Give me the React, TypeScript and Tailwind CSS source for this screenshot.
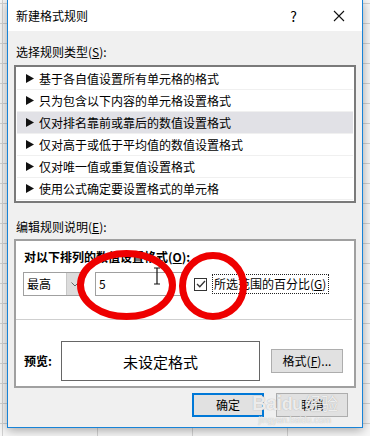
import React, { FC } from "react";

const FONT = "font-['Microsoft_YaHei','Noto_Sans_CJK_SC',sans-serif]";

const ruleTypes = [
  "基于各自值设置所有单元格的格式",
  "只为包含以下内容的单元格设置格式",
  "仅对排名靠前或靠后的数值设置格式",
  "仅对高于或低于平均值的数值设置格式",
  "仅对唯一值或重复值设置格式",
  "使用公式确定要设置格式的单元格",
];

const Arrow: FC = () => (
  <svg width="8" height="9" viewBox="0 0 8 9" className="shrink-0">
    <polygon points="0,0 8,4.5 0,9" fill="#111" />
  </svg>
);

const RuleItem: FC<{ label: string; selected?: boolean }> = ({ label, selected }) => (
  <div
    className={`flex h-[21px] items-center gap-[5px] pl-[9px] text-[12px] leading-none text-black ${
      selected ? "bg-[#e1e1e6]" : ""
    }`}
  >
    <Arrow />
    <span>{label}</span>
  </div>
);

const DialogButton: FC<{ label: React.ReactNode; primary?: boolean; className?: string }> = ({
  label,
  primary,
  className = "",
}) => (
  <button
    className={`flex h-[24px] w-[72px] items-center justify-center bg-[#e1e1e1] text-[12px] leading-none text-black ${
      primary ? "border-2 border-[#0078d7]" : "border border-[#adadad]"
    } ${className}`}
  >
    {label}
  </button>
);

const App: FC = () => {
  return (
    <div
      className={`relative h-[436px] w-[370px] overflow-hidden bg-[#f7f7f7] bg-[linear-gradient(to_right,#d2d2d2_1px,transparent_1px),linear-gradient(to_bottom,#d2d2d2_1px,transparent_1px)] bg-size-[95px_20px] bg-position-[2px_3px] ${FONT}`}
    >
      {/* dialog */}
      <div className="ml-[7px] flex h-[428px] w-[356px] flex-col border-x border-b border-[#1883d7] bg-[#f0f0f0] shadow-[0_2px_10px_rgba(0,0,0,0.35)]">
        {/* title bar */}
        <div className="flex h-[31px] shrink-0 items-center bg-white pl-[8px] text-[12px] text-black">
          <span className="leading-none">新建格式规则</span>
          <span className="ml-auto mr-[36px] text-[14px] leading-none">?</span>
          <svg width="12" height="12" viewBox="0 0 12 12" className="mr-[17px]">
            <path d="M1 1 L11 11 M11 1 L1 11" stroke="#111" strokeWidth="1.1" />
          </svg>
        </div>

        {/* body */}
        <div className="flex flex-1 flex-col px-[6px]">
          <div className="mt-[13px] pl-[2px] text-[12px] leading-[16px] text-black">
            选择规则类型(<span className="underline">S</span>):
          </div>

          <div className="mt-[5px] flex h-[138px] flex-col border-2 border-[#7a7a7a] bg-white px-[1px] pt-[1px]">
            {ruleTypes.map((r, i) => (
              <div key={r} className="border-b border-[#f0f0f0]">
                <RuleItem label={r} selected={i === 2} />
              </div>
            ))}
          </div>

          <div className="mt-[16px] pl-[2px] text-[12px] leading-[16px] text-black">
            编辑规则说明(<span className="underline">E</span>):
          </div>

          <div className="mt-[4px] flex h-[149px] flex-col border-2 border-[#a0a0a0] bg-white">
            <div className="mt-[8px] pl-[8px] text-[12px] font-bold leading-[16px] text-black">
              对以下排列的数值设置格式(<span className="underline">O</span>):
            </div>

            <div className="ml-[7px] mt-[7px] flex h-[24px] items-center">
              <div className="flex h-[24px] w-[61px] items-stretch border border-[#a0a0a0] bg-white">
                <span className="flex flex-1 items-center pl-[3px] text-[12px] leading-none">最高</span>
                <span className="flex w-[17px] items-center justify-center border-l border-[#c8c8c8] bg-[#dcdcdc]">
                  <svg width="8" height="5" viewBox="0 0 8 5">
                    <path d="M0.5 0.5 L4 4 L7.5 0.5" fill="none" stroke="#666" strokeWidth="1" />
                  </svg>
                </span>
              </div>
              <div className="ml-[11px] flex h-[24px] w-[88px] items-center border border-[#a0a0a0] pl-[3px] text-[12px] leading-none">
                5
              </div>
              <div className="ml-[11px] flex h-[13px] w-[13px] items-center justify-center border border-[#333]">
                <svg width="10" height="8" viewBox="0 0 10 8">
                  <path d="M1 4 L3.8 6.8 L9 1" fill="none" stroke="#333" strokeWidth="1.3" />
                </svg>
              </div>
              <div className="ml-[5px] flex h-[20px] w-[117px] items-center border border-dotted border-[#222] pl-[1px] text-[12px] leading-none">
                所选范围的百分比(<span className="underline">G</span>)
              </div>
            </div>

            <div className="mr-[2px] mt-[23px] h-px bg-[#cfcfcf]" />

            <div className="mt-[21px] flex items-center">
              <span className="ml-[8px] w-[37px] text-[12px] font-bold leading-none">预览:</span>
              <div className="flex h-[40px] w-[199px] items-center justify-center border border-[#666] text-[15px] leading-none">
                未设定格式
              </div>
              <DialogButton
                className="ml-[11px]"
                label={
                  <>
                    格式(<span className="underline">F</span>)...
                  </>
                }
              />
            </div>
          </div>

          <div className="mt-[5px] flex justify-end gap-[12px] pr-[8px]">
            <DialogButton primary label="确定" />
            <DialogButton label="取消" />
          </div>
        </div>
      </div>

      {/* text cursor */}
      <svg width="8" height="18" viewBox="0 0 8 18" className="pointer-events-none absolute left-[153px] top-[267px]">
        <path d="M1 1 H7 M4 1 V17 M1 17 H7" stroke="#111" strokeWidth="1.2" fill="none" />
      </svg>

      {/* red annotation circles */}
      <svg width="370" height="436" className="pointer-events-none absolute left-0 top-0">
        <ellipse cx="126.5" cy="285" rx="46" ry="31.5" fill="none" stroke="#ee0000" strokeWidth="7" />
        <ellipse cx="213" cy="286" rx="30.5" ry="30.5" fill="none" stroke="#ee0000" strokeWidth="7" />
      </svg>

      {/* watermark */}
      <div className="pointer-events-none absolute left-[252px] top-[393px] flex flex-col items-center text-white/80 [text-shadow:0_0_1px_#9a9a9a]">
        <span className="font-['Liberation_Sans',sans-serif] text-[20px] font-bold leading-none tracking-tight">
          Bai<span className="text-[18px]">du</span>
          <span className={`${FONT} ml-[2px] text-[17px] font-normal`}>经验</span>
        </span>
        <span className="font-['Liberation_Sans',sans-serif] text-[9px] leading-none mt-[3px]">jingyan.baidu.com</span>
      </div>
    </div>
  );
};

export default App;
